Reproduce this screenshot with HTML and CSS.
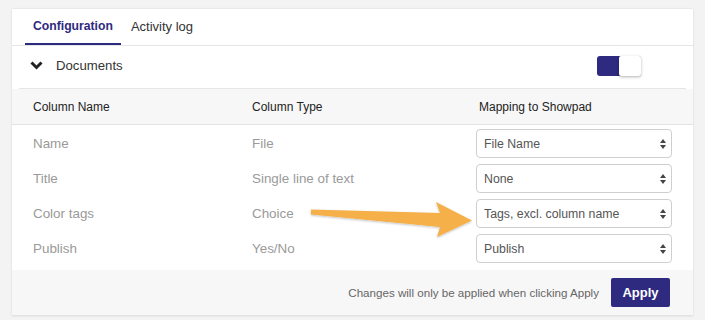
FILE: index.html
```html
<!DOCTYPE html>
<html lang="en">
  <head>
    <meta charset="utf-8" />
    <title>Showpad mapping</title>
    <link rel="stylesheet" href="styles.css">
  </head>
  <body>
    <div class="panel">
      <div class="tabs">
        <span class="tab active">Configuration</span>
        <span class="tab">Activity log</span>
      </div>
      <div class="library">
        <svg class="chevron" width="13" height="9" viewBox="0 0 13 9">
          <path d="M1.5 1.5 L6.5 6.5 L11.5 1.5" fill="none" stroke="#222" stroke-width="3" />
        </svg>
        <span class="library-name">Documents</span>
        <span class="toggle"><span class="knob"></span></span>
      </div>
      <div class="mapping">
        <div class="row head">
          <span>Column Name</span>
          <span>Column Type</span>
          <span>Mapping to Showpad</span>
        </div>
        <div class="body">
          <div class="row">
            <span>Name</span>
            <span>File</span>
            <select><option>File Name</option></select>
          </div>
          <div class="row">
            <span>Title</span>
            <span>Single line of text</span>
            <select><option>None</option></select>
          </div>
          <div class="row">
            <span>Color tags</span>
            <span>Choice</span>
            <select><option>Tags, excl. column name</option></select>
          </div>
          <div class="row">
            <span>Publish</span>
            <span>Yes/No</span>
            <select><option>Publish</option></select>
          </div>
        </div>
        <div class="footer">
          <span class="note">Changes will only be applied when clicking Apply</span>
          <button class="apply">Apply</button>
        </div>
      </div>
    </div>
    <svg class="arrow" width="705" height="320" viewBox="0 0 705 320">
      <defs>
        <filter id="shade" x="-10%" y="-30%" width="120%" height="160%">
          <feDropShadow dx="0" dy="1" stdDeviation="1" flood-color="#000" flood-opacity="0.25" />
        </filter>
      </defs>
      <polygon
        points="311,209.5 440,213 436,202 472,220.5 437,237 440,227 311,214.5"
        fill="#f5b04a"
        filter="url(#shade)"
      />
    </svg>
  </body>
</html>
```

FILE: styles.css
```css
html,
body {
  margin: 0;
  padding: 0;
}

body {
  background-color: #f3f3f3;
  font-family: "Liberation Sans", Arial, sans-serif;
  font-size: 13px;
  color: #333;
  height: 320px;
  overflow: hidden;
  position: relative;
}

.panel {
  margin: 9px 0 0 12px;
  width: 681px;
  background-color: white;
  box-shadow: 0 0 2px rgba(0, 0, 0, 0.12);
}

.tabs {
  display: flex;
  gap: 2px;
  padding-left: 13px;
  height: 36px;
  border-bottom: 1px solid #e6e6e6;
}

.tab {
  padding: 1px 8px 0;
  line-height: 33px;
  border-bottom: 2px solid transparent;
  color: #333;
  font-size: 13px;
}

.tab.active {
  color: #2d2a80;
  font-weight: bold;
  font-size: 12.2px;
  border-bottom-color: #2d2a80;
}

.library {
  display: flex;
  align-items: center;
  margin: 0 7px;
  height: 38px;
  padding: 0 45px 4px 11px;
  border-bottom: 1px solid #e6e6e6;
}

.chevron {
  margin-top: 1px;
}

.library-name {
  flex: 1;
  margin-left: 13px;
  font-size: 13.2px;
  color: #333;
}

.toggle {
  display: flex;
  justify-content: flex-end;
  width: 44px;
  height: 20px;
  margin-top: 2px;
  background-color: #2d2a80;
  border-radius: 3px;
}

.knob {
  width: 22px;
  height: 20px;
  background-color: white;
  border-radius: 2px;
  box-shadow: 0 1px 3px rgba(0, 0, 0, 0.3);
}

.row {
  display: grid;
  grid-template-columns: 219px 227px 1fr;
  align-items: center;
  padding: 0 21px;
  height: 35px;
}

.row.head {
  height: 36px;
  padding-top: 1px;
  box-sizing: border-box;
  background-color: #f7f7f7;
  border-bottom: 1px solid #e3e3e3;
  color: #222;
  font-size: 12px;
}

.body {
  padding: 1px 0 4px;
}

.body .row {
  color: #9a9a9a;
  font-size: 13.4px;
}

select {
  appearance: none;
  -webkit-appearance: none;
  margin-left: -3px;
  width: 196px;
  height: 29px;
  padding: 0 20px 0 7px;
  border: 1px solid #cfcfcf;
  border-radius: 4px;
  background-color: white;
  background-image: url("data:image/svg+xml;utf8,<svg xmlns='http://www.w3.org/2000/svg' width='8' height='12' viewBox='0 0 8 12'><path d='M4 1 L7 5 L1 5 Z M4 11 L7 7 L1 7 Z' fill='%23444'/></svg>");
  background-repeat: no-repeat;
  background-position: right 4px center;
  font-family: "Liberation Sans", Arial, sans-serif;
  font-size: 12.3px;
  color: #555;
}

.footer {
  display: flex;
  align-items: center;
  justify-content: flex-end;
  gap: 12px;
  height: 45px;
  padding-right: 23px;
  background-color: #f7f7f7;
  border-bottom: 1px solid #e3e3e3;
}

.note {
  font-size: 11.6px;
  color: #666;
}

.apply {
  width: 59px;
  height: 29px;
  border: none;
  border-radius: 2px;
  background-color: #2d2a80;
  color: white;
  font-family: "Liberation Sans", Arial, sans-serif;
  font-size: 13px;
  font-weight: bold;
}

.arrow {
  position: absolute;
  left: 0;
  top: 0;
  pointer-events: none;
}
```
